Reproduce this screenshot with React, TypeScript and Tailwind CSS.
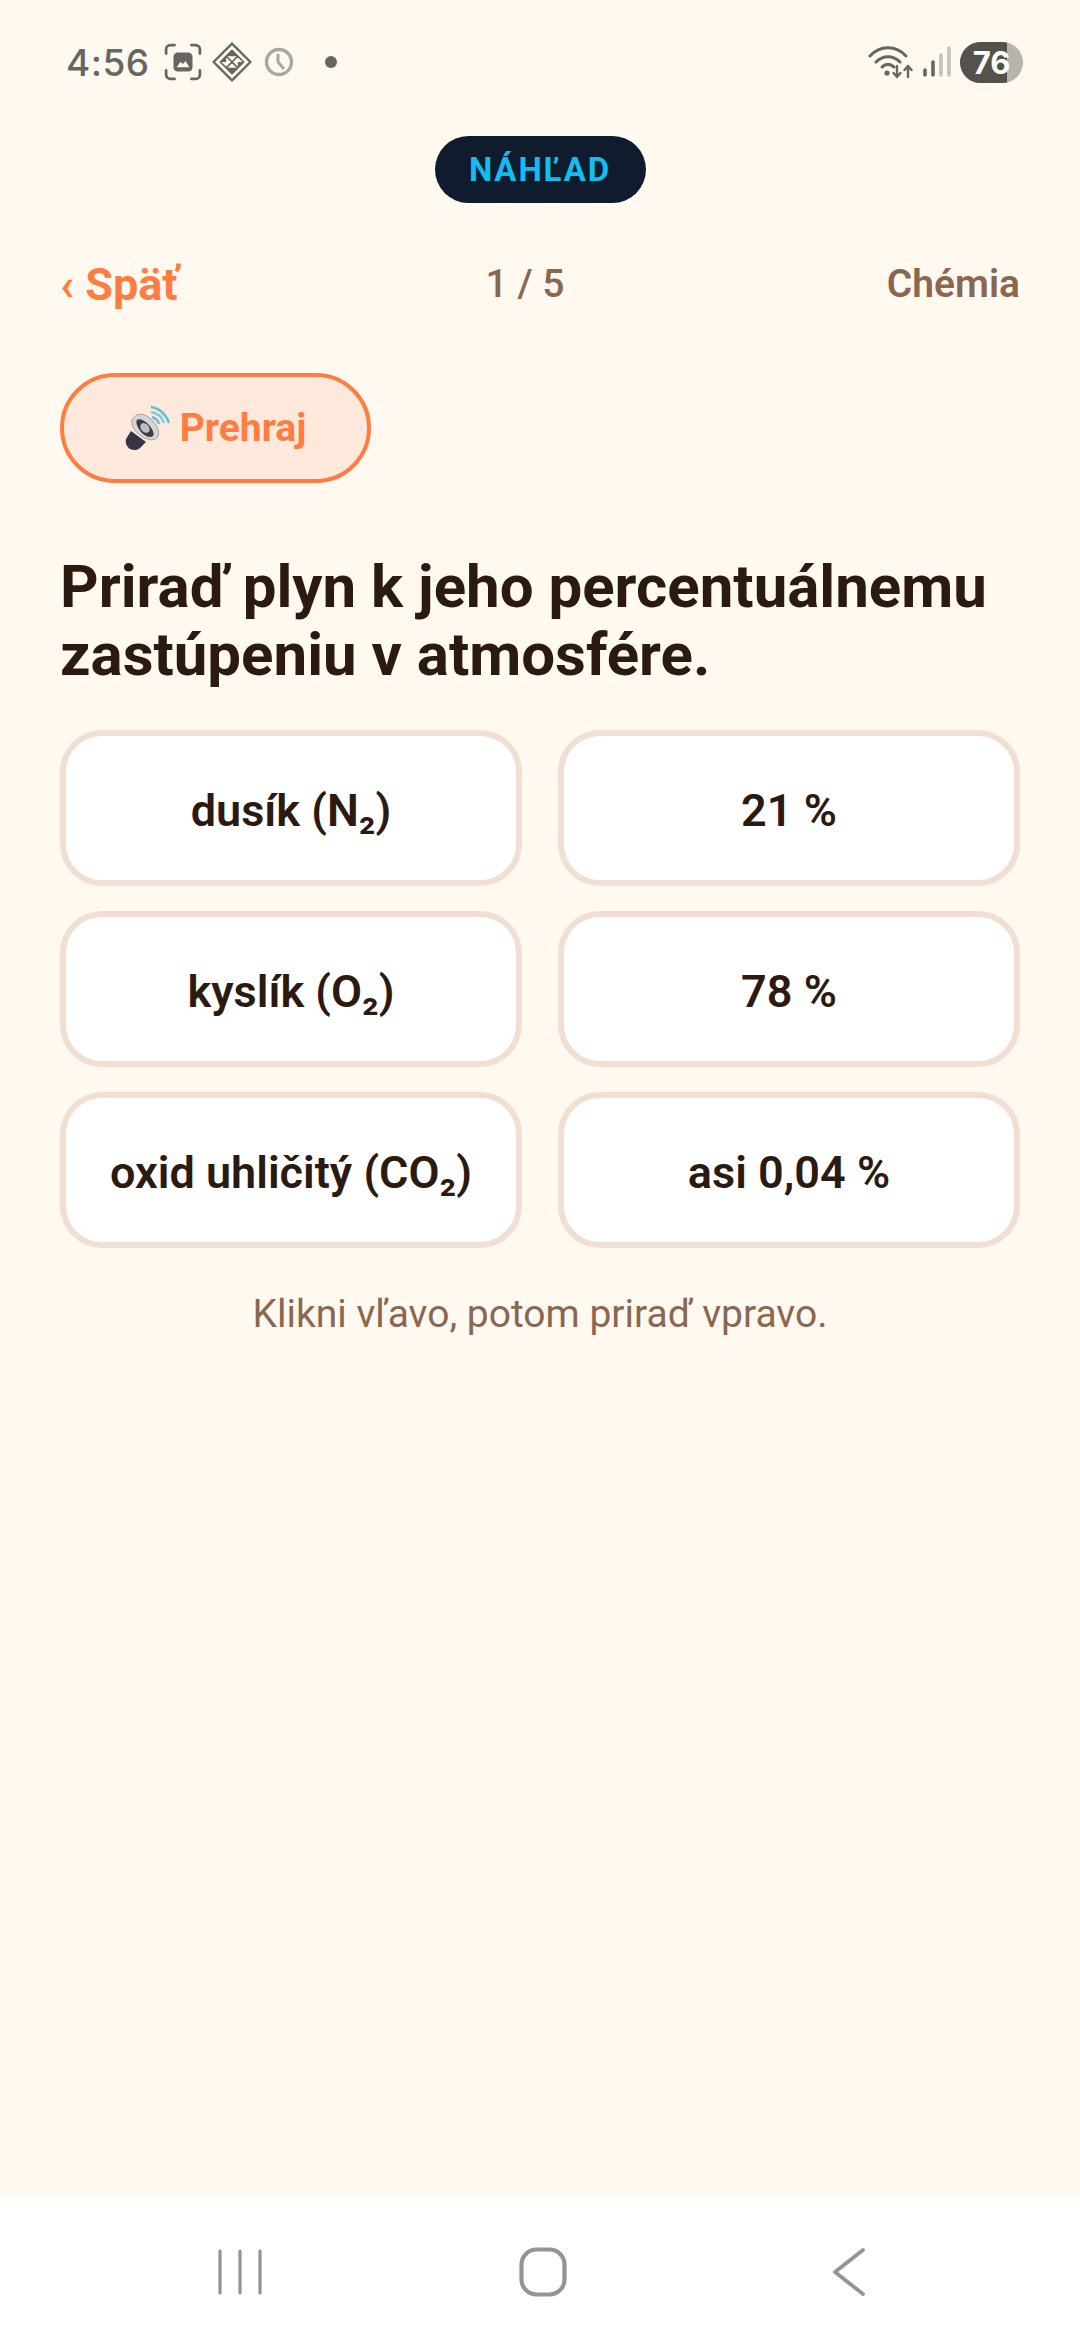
const rows = [
  ["dusík (N₂)", "21 %"],
  ["kyslík (O₂)", "78 %"],
  ["oxid uhličitý (CO₂)", "asi 0,04 %"],
];

const ScreenshotIcon = () => (
  <svg width="38" height="38" viewBox="0 0 36 36" fill="none">
    <path d="M2 10V6a4 4 0 0 1 4-4h4M26 2h4a4 4 0 0 1 4 4v4M34 26v4a4 4 0 0 1-4 4h-4M10 34H6a4 4 0 0 1-4-4v-4" stroke="#666662" strokeWidth="2.6" strokeLinecap="round" />
    <rect x="9" y="9" width="18" height="18" rx="4" fill="#666662" />
    <path d="M12 23l3.500-5 2.500 2 2.500-3 3.500 6z" fill="#fff9f0" />
  </svg>
);

const DiamondIcon = () => (
  <svg width="40" height="40" viewBox="0 0 38 38" fill="none">
    <path d="M19 1.500L36.500 19 19 36.500 1.500 19z" stroke="#666662" strokeWidth="2.2" strokeLinejoin="round" />
    <path d="M19 8l5.500 5.500L19 19l-5.500-5.500zM8 19l5.500-5.500L19 19l-5.500 5.500zM30 19l-5.500 5.500L19 19l5.500-5.500zM19 30l-5.500-5.500L19 19l5.500 5.500z" stroke="#666662" strokeWidth="1.6" strokeLinejoin="round" />
    <path d="M19 8l5.500 5.500H13.500zM8 19l5.500-5.500V19zM30 19l-5.500 5.500V19zM19 30l-5.500-5.500h11z" fill="#666662" />
  </svg>
);

const ClockIcon = () => (
  <svg width="30" height="30" viewBox="0 0 30 30" fill="none">
    <circle cx="15" cy="15" r="12.500" stroke="#a8a8a3" strokeWidth="3.400" />
    <path d="M14 7v8l6 7" stroke="#a8a8a3" strokeWidth="3" strokeLinejoin="round" />
  </svg>
);

const WifiIcon = () => (
  <svg width="46" height="36" viewBox="0 0 46 36" fill="none">
    <path d="M2 12c10-11 26-11 36 0" stroke="#666662" strokeWidth="3" strokeLinecap="round" />
    <path d="M8 18c7-7 17-7 24 0" stroke="#666662" strokeWidth="3" strokeLinecap="round" />
    <path d="M14 23c4-3.500 8-3.500 12 0" stroke="#666662" strokeWidth="3" strokeLinecap="round" />
    <circle cx="19" cy="29" r="2.600" fill="#666662" />
    <path d="M29 22v11M25.500 29l3.500 4 3.500-4M40 33V22M36.500 26l3.500-4 3.500 4" stroke="#666662" strokeWidth="2.400" strokeLinecap="round" strokeLinejoin="round" />
  </svg>
);

const SignalIcon = () => (
  <svg width="30" height="32" viewBox="0 0 30 32" fill="none">
    <path d="M3 24v5" stroke="#666662" strokeWidth="3.600" strokeLinecap="round" />
    <path d="M11 16v13" stroke="#666662" strokeWidth="3.600" strokeLinecap="round" />
    <path d="M19 9v20M27 2v27" stroke="#c4c3bd" strokeWidth="3.600" strokeLinecap="round" />
  </svg>
);

const SpeakerIcon = () => (
  <svg width="46" height="46" viewBox="0 0 46 46" fill="none">
    <path d="M26 2c8 1 15 7 18 16" stroke="#62bddb" strokeWidth="2.400" />
    <path d="M26 7c6 1 11 5 13 11" stroke="#7cc9e2" strokeWidth="2.400" />
    <path d="M27 12c3 1 6 3 7 7" stroke="#62bddb" strokeWidth="2.400" />
    <path d="M6 26L1 34c-1 4 1 8 4 10 4 2 8 1 10-1l6-6z" fill="#37344a" />
    <path d="M12 10c4-2 10 0 15 5s8 12 6 16c-1 3-5 5-10 3C14 32 5 22 7 15c1-2 3-4 5-5z" fill="#d6d6d6" stroke="#a3a3a3" strokeWidth="1" />
    <path d="M12 15c2-2 7 0 11 4s7 10 5 12-7 1-11-3-7-11-5-13z" fill="#3b3c44" />
    <ellipse cx="20" cy="23" rx="4" ry="5.500" transform="rotate(-42 20 23)" fill="#bdbdbd" />
  </svg>
);

export default function App() {
  return (
    <div className="w-[1080px] h-[2340px] flex flex-col bg-[#fff9f0] font-['Roboto',sans-serif]">
      <div className="h-[124px] flex items-start justify-between pt-[40px] pl-[66px] pr-[57px]">
        <div className="flex items-center h-[44px]">
          <span className="font-['Inter',sans-serif] font-medium text-[37px] leading-none text-[#666662] tracking-[0.5px] w-[99px]">4:56</span>
          <span className="-ml-[1px]"><ScreenshotIcon /></span>
          <span className="ml-[10px]"><DiamondIcon /></span>
          <span className="ml-[12px]"><ClockIcon /></span>
          <span className="ml-[31px] w-[12px] h-[12px] rounded-full bg-[#666662]" />
        </div>
        <div className="flex items-center h-[44px]">
          <WifiIcon />
          <span className="ml-[8px]"><SignalIcon /></span>
          <span className="relative ml-[8px] w-[63px] h-[41px] rounded-full overflow-hidden bg-[#b7b4ae] flex">
            <span className="w-[47px] bg-[#53524d]" />
            <span className="absolute inset-0 flex items-center justify-center font-['Inter',sans-serif] font-bold text-[31px] leading-none text-white">76</span>
          </span>
        </div>
      </div>

      <div className="flex-1 px-[60px]">
        <div className="flex justify-center pt-[12px]">
          <div className="w-[211px] h-[67px] rounded-full bg-[#0f1c2e] flex items-center justify-center text-[#12bdf0] font-bold text-[33px] tracking-[1.9px]">NÁHĽAD</div>
        </div>

        <div className="mt-[49px] h-[64px] grid grid-cols-3 items-center">
          <div className="text-[#ff7d42] font-bold text-[45px] leading-none">‹ Späť</div>
          <div className="text-center text-[#8a6750] font-medium text-[39px] leading-none -ml-[30px]">1 / 5</div>
          <div className="text-right text-[#8a6750] font-semibold text-[39px] leading-none">Chémia</div>
        </div>

        <div className="mt-[57px] w-[311px] h-[110px] rounded-full border-4 border-[#ff7d42] bg-[#ffe8dc] flex items-center justify-center gap-[9px]">
          <SpeakerIcon />
          <span className="text-[#ff7d42] font-bold text-[39px] leading-none">Prehraj</span>
        </div>

        <h1 className="mt-[70px] font-bold text-[60px] leading-[68px] text-[#2b1a10]">
          Priraď plyn k jeho percentuálnemu zastúpeniu v atmosfére.
        </h1>

        <div className="mt-[41px] grid grid-cols-2 gap-x-[36px] gap-y-[25px]">
          {rows.flat().map((label) => (
            <div key={label} className="h-[156px] pt-[4px] rounded-[42px] border-[6px] border-[#f0dfd2] bg-white flex items-center justify-center font-semibold text-[45px] leading-none text-[#2b1a10]">
              {label}
            </div>
          ))}
        </div>

        <p className="mt-[44px] text-center text-[39px] leading-[44px] text-[#8a6750]">Klikni vľavo, potom priraď vpravo.</p>
      </div>

      <div className="h-[145px] bg-white flex items-center justify-between pl-[217px] pr-[214px] pt-[8px]">
        <svg width="46" height="46" viewBox="0 0 46 46" fill="none">
          <path d="M3 2v42M23 2v42M43 2v42" stroke="#949494" strokeWidth="3.200" strokeLinecap="round" />
        </svg>
        <svg className="-ml-[10px]" width="48" height="50" viewBox="0 0 48 50" fill="none">
          <rect x="2.500" y="2.500" width="43" height="45" rx="15" stroke="#949494" strokeWidth="4.200" />
        </svg>
        <svg width="34" height="50" viewBox="0 0 34 50" fill="none">
          <path d="M31 3L3 25l0 0 28 22" stroke="#949494" strokeWidth="3.800" strokeLinecap="round" strokeLinejoin="round" />
        </svg>
      </div>
    </div>
  );
}
